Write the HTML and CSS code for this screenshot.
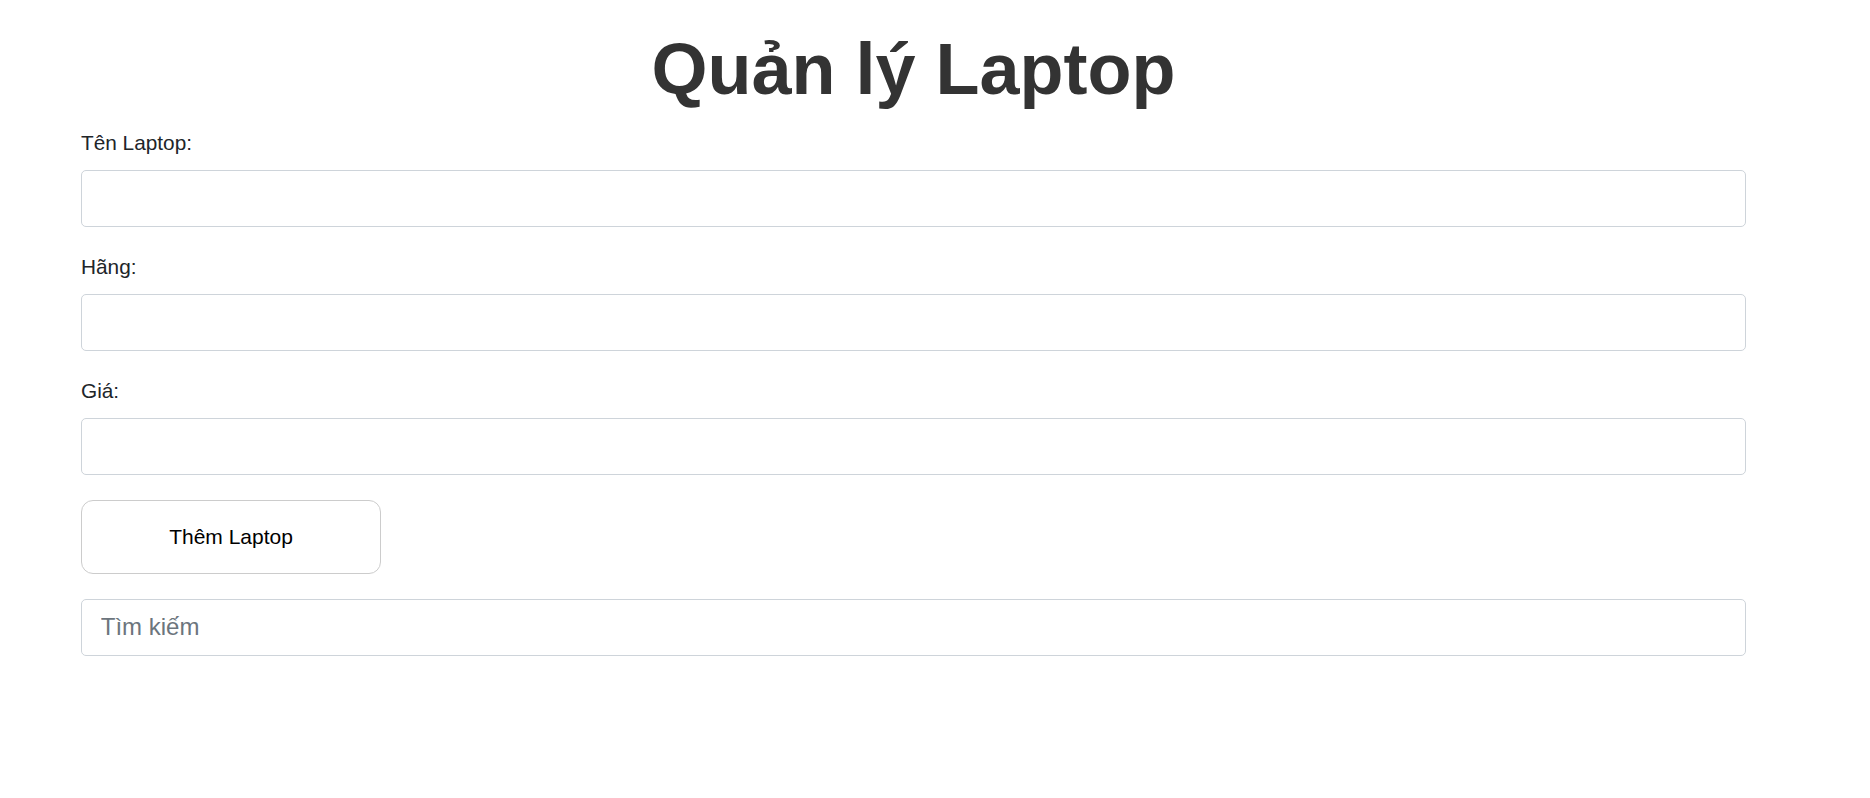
FILE: index.html
```html
<!DOCTYPE html>
<html>
<head>
<meta charset="utf-8">
<meta name="viewport" content="width=device-width, initial-scale=1">
<title>Quản lý Laptop</title>
<link rel="stylesheet" href="styles.css">
</head>
<body>

<div class="container">
    <h1>Quản lý Laptop</h1>

    <form action="">
        <label for="ten">Tên Laptop:</label>
        <input type="text" name="ten" id="ten">

        <label for="hang">Hãng:</label>
        <input type="text" name="hang" id="hang">

        <label for="gia">Giá:</label>
        <input type="text" name="gia" id="gia">

        <button type="button" class="addBTN">Thêm Laptop</button>
    </form>

    <input type="text" class="search" placeholder="Tìm kiếm" id="search">
</div>

</body>
</html>
```

FILE: styles.css
```css
* {
    box-sizing: border-box;
}

body {
    margin: 0;
    font-family: "Liberation Sans", Arial, Helvetica, sans-serif;
    background-color: white;
    color: #212529;
}

.container {
    width: 1665px;
    margin-left: 81px;
}

h1 {
    margin: 26px 0 15.5px 0;
    font-size: 72px;
    line-height: 86.4px;
    font-weight: bold;
    text-align: center;
    color: #333;
}

label {
    display: block;
    font-size: 20.8px;
    line-height: 30px;
    margin-bottom: 12.5px;
}

input[type=text] {
    display: block;
    width: 100%;
    height: 57px;
    margin: 0 0 24.5px 0;
    padding: 0 18.75px;
    border: 1px solid #ced4da;
    border-radius: 5px;
    font-family: "Liberation Sans", Arial, Helvetica, sans-serif;
    font-size: 24px;
    color: #212529;
    background: white;
}

input[type=text]:focus {
    outline: none;
}

input::placeholder {
    color: #6c757d;
}

.addBTN {
    display: block;
    width: 300px;
    height: 74px;
    margin: 0 0 25px 0;
    border: 1px solid #ccc;
    border-radius: 12px;
    background-color: white;
    font-family: "Liberation Sans", Arial, Helvetica, sans-serif;
    font-size: 21px;
    color: black;
    cursor: pointer;
}

.search {
    height: 56px;
}
```
